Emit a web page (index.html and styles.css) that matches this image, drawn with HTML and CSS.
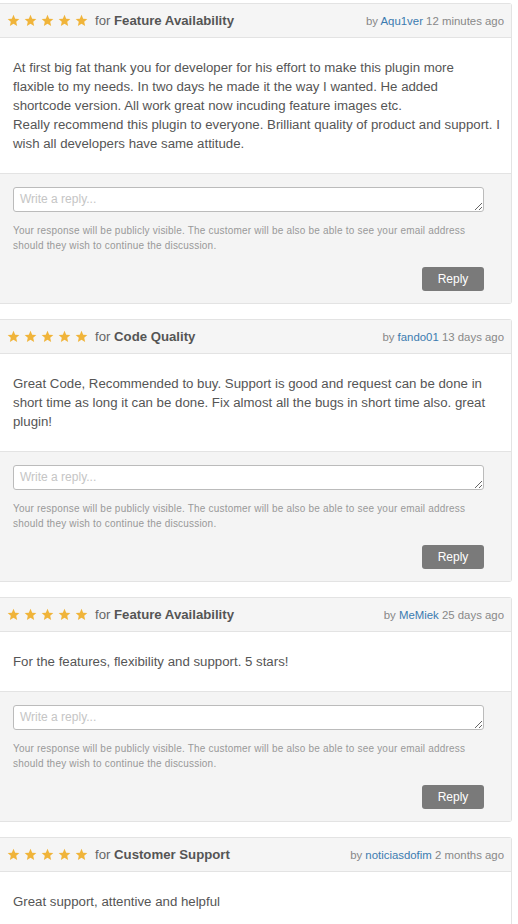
FILE: index.html
```html
<!DOCTYPE html>
<html>
<head>
<meta charset="utf-8">
<link rel="stylesheet" href="styles.css">
</head>
<body>
<svg width="0" height="0" style="position:absolute">
  <defs>
    <symbol id="star" viewBox="0 0 24 24">
      <path d="M12 1.5l3.1 7.1 7.7.7-5.8 5.1 1.7 7.6L12 18l-6.7 4 1.7-7.6-5.8-5.1 7.7-.7z"/>
    </symbol>
  </defs>
</svg>
<div class="list">

  <div class="card">
    <div class="head">
      <div class="rating">
        <span class="stars"><svg><use href="#star"/></svg><svg><use href="#star"/></svg><svg><use href="#star"/></svg><svg><use href="#star"/></svg><svg><use href="#star"/></svg></span>
        <span class="for">for <b>Feature Availability</b></span>
      </div>
      <div class="meta">by <a href="#">Aqu1ver</a> 12 minutes ago</div>
    </div>
    <div class="body">At first big fat thank you for developer for his effort to make this plugin more<br>flaxible to my needs. In two days he made it the way I wanted. He added<br>shortcode version. All work great now incuding feature images etc.<br>Really recommend this plugin to everyone. Brilliant quality of product and support. I wish all developers have same attitude.</div>
    <div class="reply">
      <textarea placeholder="Write a reply..."></textarea>
      <p class="note">Your response will be publicly visible. The customer will be also be able to see your email address should they wish to continue the discussion.</p>
      <div class="actions"><button>Reply</button></div>
    </div>
  </div>

  <div class="card">
    <div class="head">
      <div class="rating">
        <span class="stars"><svg><use href="#star"/></svg><svg><use href="#star"/></svg><svg><use href="#star"/></svg><svg><use href="#star"/></svg><svg><use href="#star"/></svg></span>
        <span class="for">for <b>Code Quality</b></span>
      </div>
      <div class="meta">by <a href="#">fando01</a> 13 days ago</div>
    </div>
    <div class="body">Great Code, Recommended to buy. Support is good and request can be done in short time as long it can be done. Fix almost all the bugs in short time also. great plugin!</div>
    <div class="reply">
      <textarea placeholder="Write a reply..."></textarea>
      <p class="note">Your response will be publicly visible. The customer will be also be able to see your email address should they wish to continue the discussion.</p>
      <div class="actions"><button>Reply</button></div>
    </div>
  </div>

  <div class="card">
    <div class="head">
      <div class="rating">
        <span class="stars"><svg><use href="#star"/></svg><svg><use href="#star"/></svg><svg><use href="#star"/></svg><svg><use href="#star"/></svg><svg><use href="#star"/></svg></span>
        <span class="for">for <b>Feature Availability</b></span>
      </div>
      <div class="meta">by <a href="#">MeMiek</a> 25 days ago</div>
    </div>
    <div class="body">For the features, flexibility and support. 5 stars!</div>
    <div class="reply">
      <textarea placeholder="Write a reply..."></textarea>
      <p class="note">Your response will be publicly visible. The customer will be also be able to see your email address should they wish to continue the discussion.</p>
      <div class="actions"><button>Reply</button></div>
    </div>
  </div>

  <div class="card">
    <div class="head">
      <div class="rating">
        <span class="stars"><svg><use href="#star"/></svg><svg><use href="#star"/></svg><svg><use href="#star"/></svg><svg><use href="#star"/></svg><svg><use href="#star"/></svg></span>
        <span class="for">for <b>Customer Support</b></span>
      </div>
      <div class="meta">by <a href="#">noticiasdofim</a> 2 months ago</div>
    </div>
    <div class="body">Great support, attentive and helpful</div>
  </div>

</div>
</body>
</html>
```
FILE: styles.css
```css
* { box-sizing: border-box; }
html, body { margin: 0; padding: 0; background: #fff; }
body {
  font-family: "Liberation Sans", Arial, sans-serif;
  color: #555;
  overflow: hidden;
}
.list {
  width: 512px;
  padding-top: 3px;
  display: flex;
  flex-direction: column;
  gap: 15px;
}
.card {
  border: 1px solid #e3e3e3;
  border-left: none;
  border-radius: 0 3px 3px 0;
  background: #fff;
}
.head {
  height: 34px;
  background: #f5f5f5;
  border-bottom: 1px solid #e3e3e3;
  display: flex;
  align-items: center;
  justify-content: space-between;
  padding: 0 7px 0 7px;
}
.rating { display: flex; align-items: center; }
.stars { display: flex; gap: 4px; margin-right: 7px; }
.stars svg { width: 13px; height: 13px; fill: #f0b43a; display: block; }
.for { font-size: 13.2px; color: #666; }
.for b { color: #555; }
.meta { font-size: 11.4px; color: #888; }
.meta a { color: #3b7bb0; text-decoration: none; }
.body {
  padding: 20px 4px 20px 13px;
  font-size: 13.25px;
  line-height: 19px;
  color: #555;
}
.reply {
  background: #f4f4f4;
  border-top: 1px solid #e3e3e3;
  padding: 13px 27px 12px 13px;
}
.reply textarea {
  display: block;
  width: 100%;
  height: 25px;
  border: 1px solid #bbb;
  border-radius: 3px;
  background: #fff;
  padding: 4px 6px;
  font-family: "Liberation Sans", Arial, sans-serif;
  font-size: 12px;
  color: #555;
  resize: vertical;
}
.reply textarea::placeholder { color: #c5c5c5; }
.note {
  margin: 11px 0 0;
  font-size: 10px;
  line-height: 15px;
  color: #999;
  letter-spacing: 0.2px;
}
.actions { display: flex; justify-content: flex-end; margin-top: 14px; }
.actions button {
  width: 62px;
  height: 24px;
  border: none;
  border-radius: 3px;
  background: #7a7a7a;
  color: #fff;
  font-family: "Liberation Sans", Arial, sans-serif;
  font-size: 12px;
  padding: 0;
}
```
